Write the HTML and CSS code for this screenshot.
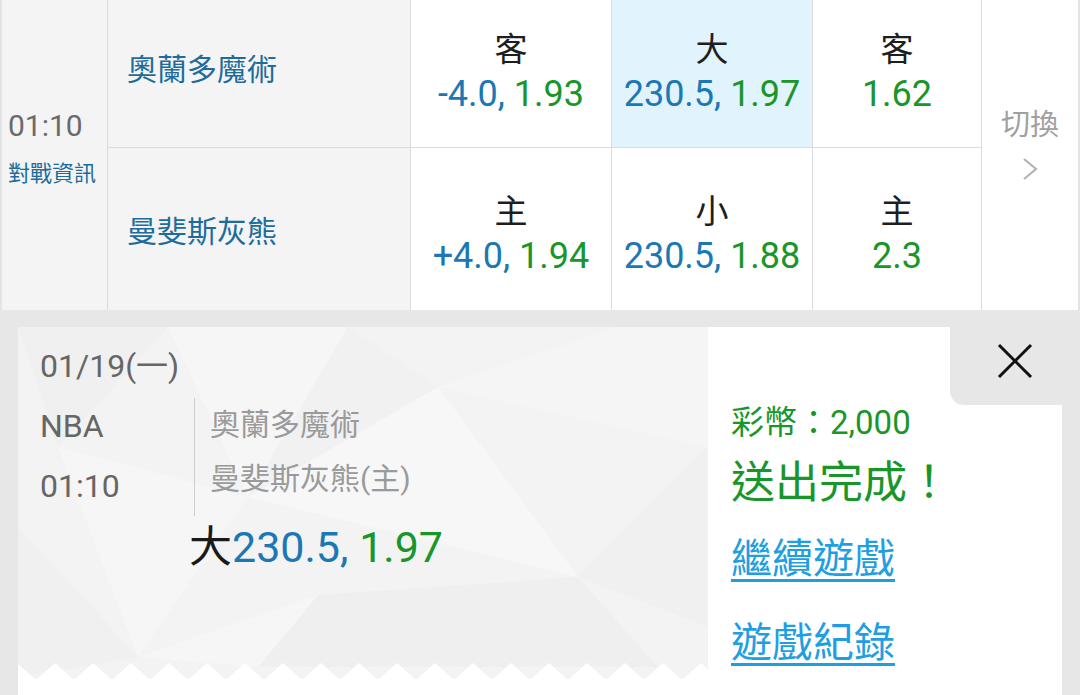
FILE: index.html
```html
<!DOCTYPE html>
<html lang="zh-Hant">
<head>
<meta charset="utf-8">
<title>投注完成</title>
<link rel="stylesheet" href="styles.css">
</head>
<body>
<div class="board">
  <div class="time-col">
    <div class="time">01:10</div>
    <div class="info">對戰資訊</div>
  </div>
  <div class="team r1">奧蘭多魔術</div>
  <div class="odd r1"><div class="lbl">客</div><div class="num"><span class="b">-4.0,</span> <span class="g">1.93</span></div></div>
  <div class="odd r1 sel"><div class="lbl">大</div><div class="num"><span class="b">230.5,</span> <span class="g">1.97</span></div></div>
  <div class="odd r1"><div class="lbl">客</div><div class="num"><span class="g">1.62</span></div></div>
  <div class="switch">
    <div class="sw-txt">切換</div>
    <svg class="chev" width="16" height="24" viewBox="0 0 16 24"><polyline points="2,2 14,12 2,22" fill="none" stroke="#b3b3b3" stroke-width="2.2"/></svg>
  </div>
  <div class="team r2">曼斐斯灰熊</div>
  <div class="odd r2"><div class="lbl">主</div><div class="num"><span class="b">+4.0,</span> <span class="g">1.94</span></div></div>
  <div class="odd r2"><div class="lbl">小</div><div class="num"><span class="b">230.5,</span> <span class="g">1.88</span></div></div>
  <div class="odd r2"><div class="lbl">主</div><div class="num"><span class="g">2.3</span></div></div>
</div>

<div class="bottom">
  <div class="card">
    <div class="bet">
      <svg class="facets" width="690" height="368" viewBox="0 0 690 368">
        <defs>
          <pattern id="zig" x="18" y="336" width="38" height="17" patternUnits="userSpaceOnUse">
            <polygon points="0,17 19,0 38,17" fill="#ffffff"/>
          </pattern>
        </defs>
        <rect width="690" height="368" fill="#f3f3f3"/>
        <polygon points="0,0 150,0 40,120" fill="#f0f0f0"/>
        <polygon points="150,0 330,0 230,170" fill="#f6f6f6"/>
        <polygon points="230,170 330,0 420,60" fill="#f1f1f1"/>
        <polygon points="420,60 600,0 690,0 690,120" fill="#f5f5f5"/>
        <polygon points="40,120 230,170 120,330" fill="#f6f6f6"/>
        <polygon points="230,170 420,60 560,250" fill="#f7f7f7"/>
        <polygon points="560,250 690,120 690,300" fill="#f0f0f0"/>
        <polygon points="300,268 560,250 640,340 240,340" fill="#efefef"/>
        <polygon points="0,200 120,330 0,350" fill="#f0f0f0"/>
        <polygon points="120,330 300,268 240,340" fill="#f6f6f6"/>
        <rect x="0" y="336" width="690" height="17" fill="url(#zig)"/>
        <rect x="0" y="352" width="690" height="16" fill="#ffffff"/>
      </svg>
      <div class="bet-body">
        <div class="date">01/19(一)</div>
        <div class="match">
          <div class="meta"><div>NBA</div><div>01:10</div></div>
          <div class="teams"><div>奧蘭多魔術</div><div>曼斐斯灰熊(主)</div></div>
        </div>
        <div class="pick">大<span class="b">230.5,</span> <span class="g">1.97</span></div>
      </div>
    </div>
    <div class="result">
      <div class="coins">彩幣：2,000</div>
      <div class="done">送出完成！</div>
      <a class="link first" href="#">繼續遊戲</a>
      <a class="link" href="#">遊戲紀錄</a>
    </div>
    <div class="close-tab">
      <svg width="36" height="36" viewBox="0 0 36 36"><path d="M2 2 L34 34 M34 2 L2 34" stroke="#111" stroke-width="3" fill="none"/></svg>
    </div>
  </div>
</div>
</body>
</html>
```

FILE: styles.css
```css
html, body {
  margin: 0;
  padding: 0;
  background: #ffffff;
  font-family: Roboto, "Noto Sans CJK TC", sans-serif;
}
body {
  width: 1080px;
  height: 695px;
  overflow: hidden;
}

/* ---------- odds board ---------- */
.board {
  display: grid;
  grid-template-columns: 108px 303px 201px 201px 169px 98px;
  grid-template-rows: 148px 162px;
  background: #ffffff;
}
.board > div {
  box-sizing: border-box;
  border-right: 1px solid #d8dcdf;
}
.time-col {
  grid-row: 1 / 3;
  grid-column: 1;
  background: #f4f4f4;
  border-left: 2px solid #e4e4e4;
  padding: 104px 0 0 6px;
}
.time {
  font-size: 30px;
  line-height: 44px;
  color: #6a6a6a;
}
.info {
  font-size: 22px;
  line-height: 52px;
  color: #1d6c9c;
}
.team {
  background: #f4f4f4;
  padding-left: 19px;
  font-size: 30px;
  line-height: 40px;
  color: #1d6c9c;
}
.team.r1 { padding-top: 50px; border-bottom: 1px solid #d8dcdf; }
.team.r2 { padding-top: 64px; }
.odd {
  text-align: center;
}
.odd.r1 { padding-top: 30px; border-bottom: 1px solid #d8dcdf; }
.odd.r2 { padding-top: 44px; }
.odd.sel { background: #e1f3fc; }
.lbl {
  font-size: 33px;
  line-height: 40px;
  color: #1e1e1e;
}
.num {
  font-size: 36px;
  line-height: 48px;
}
.b { color: #1c78b4; }
.g { color: #19962a; }
.switch {
  grid-row: 1 / 3;
  grid-column: 6;
  padding-top: 105px;
  display: flex;
  flex-direction: column;
  align-items: center;
  border-right: 2px solid #e2e2e2 !important;
}
.sw-txt {
  font-size: 29px;
  line-height: 40px;
  color: #a0a0a0;
}
.chev {
  margin-top: 12px;
}

/* ---------- bottom ticket ---------- */
.bottom {
  background: #e7e7e7;
  height: 385px;
  box-sizing: border-box;
  padding: 17px 18px 0 18px;
}
.card {
  position: relative;
  display: flex;
  height: 368px;
  background: #ffffff;
}
.bet {
  position: relative;
  width: 690px;
  flex: none;
}
.facets {
  position: absolute;
  left: 0;
  top: 0;
}
.bet-body {
  position: relative;
  padding: 19px 0 0 22px;
}
.date {
  font-size: 32px;
  line-height: 40px;
  color: #666666;
}
.match {
  display: flex;
  margin-top: 10px;
}
.meta {
  width: 154px;
  font-size: 32px;
  line-height: 60px;
  color: #666666;
}
.teams {
  border-left: 1px solid #cdcdcd;
  padding-left: 15px;
  margin-top: 2px;
  font-size: 30px;
  line-height: 54px;
  color: #9a9a9a;
}
.pick {
  margin: 6px 0 0 149px;
  font-size: 43px;
  line-height: 50px;
  color: #1a1a1a;
}
.result {
  flex: 1;
  padding: 73px 0 0 23px;
}
.coins {
  font-size: 33px;
  line-height: 46px;
  color: #19962a;
}
.done {
  margin-top: 9px;
  font-size: 44px;
  line-height: 56px;
  color: #19962a;
}
.link {
  display: block;
  width: max-content;
  margin-top: 28px;
  font-size: 41px;
  line-height: 56px;
  color: #1f9fe2;
  text-decoration: underline;
  text-decoration-thickness: 3px;
  text-underline-offset: 6px;
}
.link.first { margin-top: 20px; }
.close-tab {
  position: absolute;
  top: 0;
  right: 0;
  width: 112px;
  height: 78px;
  box-sizing: border-box;
  background: #e7e7e7;
  border-bottom-left-radius: 14px;
  display: flex;
  align-items: center;
  justify-content: center;
  padding: 0 0 10px 18px;
}
```
